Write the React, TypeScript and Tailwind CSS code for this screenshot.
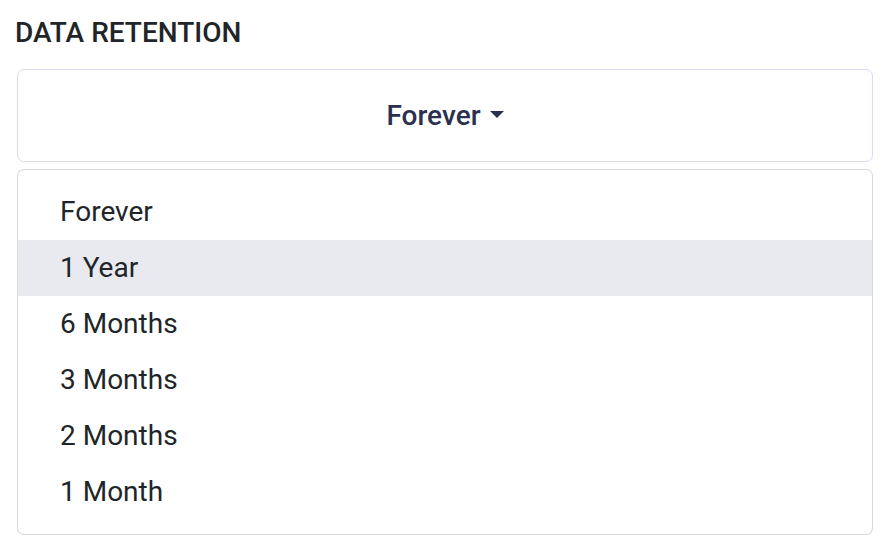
import { useState } from 'react'

const OPTIONS = ['Forever', '1 Year', '6 Months', '3 Months', '2 Months', '1 Month']

export default function App() {
  const [value, setValue] = useState('Forever')
  const [hovered, setHovered] = useState('1 Year')

  return (
    <div className="w-[893px] h-[553px] overflow-hidden bg-white font-['Roboto',sans-serif]">
      <div className="pt-[16px] pl-[15px] pr-[20px]">
        <h2 className="text-[28px] leading-[34px] font-medium text-[#212529]">
          DATA RETENTION
        </h2>

        <div className="relative mt-[19px] ml-[2px]">
          <button
            type="button"
            className="w-full h-[93px] flex items-center justify-center rounded-[7px] border border-[#d9dcef] bg-white text-[28px] font-medium text-[#2b3050]"
          >
            <span>{value}</span>
            <svg
              width="14"
              height="7"
              viewBox="0 0 14 7"
              className="ml-[9px] mt-[-2px]"
              aria-hidden="true"
            >
              <path d="M0 0 H14 L7 7 Z" fill="#2b3050" />
            </svg>
          </button>

          {/* open menu sits over the next section */}
          <ul className="absolute left-0 right-0 top-[100px] z-10 py-[14px] rounded-[7px] border border-black/15 bg-white">
            {OPTIONS.map((o) => (
              <li
                key={o}
                onMouseEnter={() => setHovered(o)}
                onClick={() => setValue(o)}
                className={
                  'h-[56px] flex items-center px-[42px] text-[28px] text-[#212529] cursor-pointer ' +
                  (hovered === o ? 'bg-[#e9eaef]' : 'bg-white')
                }
              >
                {o}
              </li>
            ))}
          </ul>
        </div>

        {/* next section, mostly covered by the open menu */}
        <div className="mt-[220px] ml-[2px] w-[3px] h-[20px] bg-[#212529]" />
        <div className="mt-[28px] ml-[2px] h-[93px] rounded-[7px] border border-[#c9cde6] bg-white" />
      </div>
    </div>
  )
}
